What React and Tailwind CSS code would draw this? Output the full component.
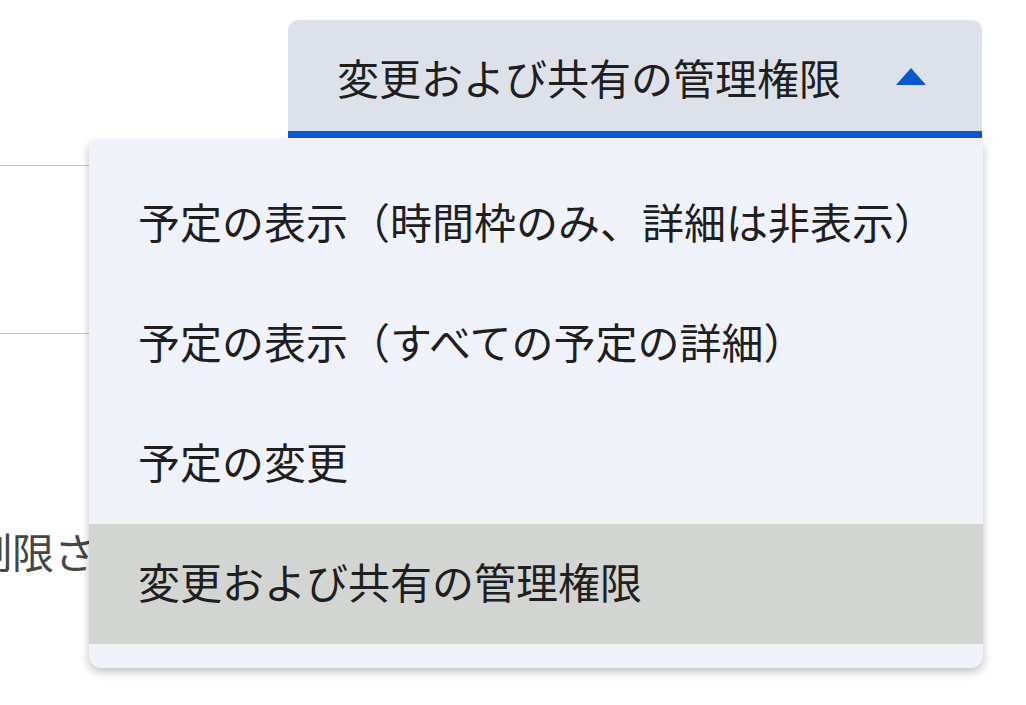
import React from 'react';

const items = [
  '予定の表示（時間枠のみ、詳細は非表示）',
  '予定の表示（すべての予定の詳細）',
  '予定の変更',
  '変更および共有の管理権限',
];

const App = () => {
  const selected = 3;

  return (
    <div className="relative h-[705px] w-[1026px] overflow-hidden bg-white font-['Noto_Sans_CJK_JP',sans-serif] text-[#1f1f1f]">
      {/* Dropdown trigger */}
      <div className="flex justify-end pt-[20px] pr-[44px]">
        <button className="flex h-[118px] w-[694px] items-center justify-between rounded-t-[10px] border-b-[7px] border-[#0b57d0] bg-[#dde1ea] pt-[2px] pl-[49px] pr-[56px] text-[42px] leading-none text-[#1f1f1f]">
          <span>変更および共有の管理権限</span>
          <svg width="30" height="17" viewBox="0 0 30 17">
            <path d="M15 0 L30 17 L0 17 Z" fill="#0b57d0" />
          </svg>
        </button>
      </div>

      {/* Page content behind the menu */}
      <div className="mt-[27px] h-[168px] w-[120px] border-t border-[#c7c7c7]" />
      <div className="w-[120px] border-t border-[#c7c7c7]" />
      <div className="mt-[196px] flex w-[96px] justify-end overflow-hidden whitespace-nowrap text-[42px] leading-none text-[#444746]">
        <span>制限さ</span>
      </div>

      {/* Open menu */}
      <div className="absolute left-[89px] top-[140px] w-[894px] rounded-t-[4px] rounded-b-[12px] bg-[#eff2f9] py-[24px] shadow-[0_4px_10px_rgba(0,0,0,0.25)]">
        {items.map((label, i) => (
          <div
            key={label}
            className={`flex h-[120px] items-center pl-[49px] pb-[6px] text-[42px] leading-none text-[#1f1f1f] ${
              i === selected ? 'bg-[#d3d5d3]' : ''
            }`}
          >
            {label}
          </div>
        ))}
      </div>
    </div>
  );
};

export default App;
